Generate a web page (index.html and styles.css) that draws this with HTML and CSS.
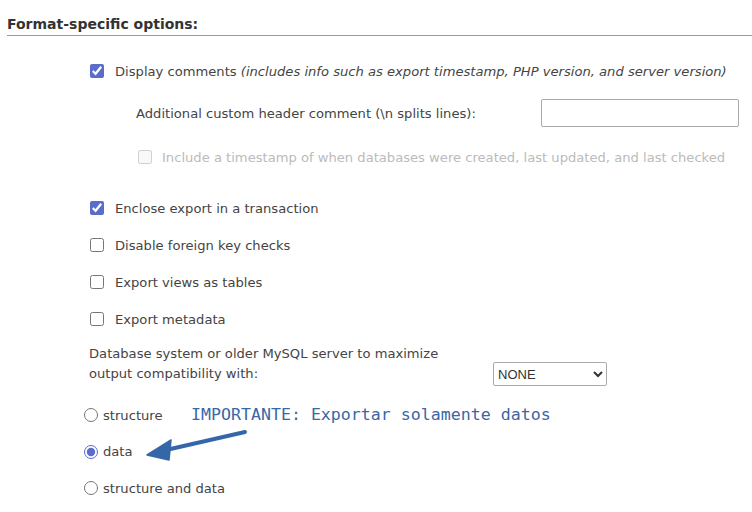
FILE: index.html
```html
<!DOCTYPE html>
<html>
<head>
<meta charset="utf-8">
<link rel="stylesheet" href="styles.css">
</head>
<body>
<div class="page">
  <h2 class="heading">Format-specific options:</h2>
  <div class="options">
    <div class="row row-first">
      <input type="checkbox" class="cb" checked>
      <label class="lbl">Display comments <i>(includes info such as export timestamp, PHP version, and server version)</i></label>
    </div>
    <div class="row row-sub">
      <label class="lbl sub-lbl">Additional custom header comment (\n splits lines):</label>
      <input type="text" class="text-in">
    </div>
    <div class="row row-sub2">
      <input type="checkbox" class="cb" disabled>
      <label class="lbl disabled">Include a timestamp of when databases were created, last updated, and last checked</label>
    </div>
    <div class="row row-gap">
      <input type="checkbox" class="cb" checked>
      <label class="lbl">Enclose export in a transaction</label>
    </div>
    <div class="row">
      <input type="checkbox" class="cb">
      <label class="lbl">Disable foreign key checks</label>
    </div>
    <div class="row">
      <input type="checkbox" class="cb">
      <label class="lbl">Export views as tables</label>
    </div>
    <div class="row">
      <input type="checkbox" class="cb">
      <label class="lbl">Export metadata</label>
    </div>
    <div class="compat">
      <label class="compat-lbl">Database system or older MySQL server to maximize output compatibility with:</label>
      <select class="sel"><option>NONE</option></select>
    </div>
    <div class="radios">
      <div class="rrow"><input type="radio" name="m" class="rb"><label class="lbl">structure</label></div>
      <div class="rrow"><input type="radio" name="m" class="rb" checked><label class="lbl">data</label></div>
      <div class="rrow"><input type="radio" name="m" class="rb"><label class="lbl">structure and data</label></div>
    </div>
  </div>
  <div class="note">IMPORTANTE: Exportar solamente datos</div>
  <svg class="arrow" width="752" height="512" viewBox="0 0 752 512">
    <line x1="245" y1="432" x2="166" y2="450" stroke="#3567a8" stroke-width="4" stroke-linecap="round"/>
    <polygon points="147,455 171,440 169,460" fill="#3567a8" stroke="#3567a8" stroke-width="1.5" stroke-linejoin="round"/>
  </svg>
</div>
</body>
</html>
```
FILE: styles.css
```css
html, body {
  margin: 0;
  padding: 0;
  background: #fff;
}
.page {
  position: relative;
  width: 752px;
  height: 512px;
  overflow: hidden;
  font-family: "DejaVu Sans", sans-serif;
  font-size: 13.12px;
  color: #444;
}
.heading {
  margin: 0 0 0 7px;
  padding-top: 16px;
  height: 19px;
  font-size: 14px;
  font-weight: bold;
  line-height: 17px;
  color: #333;
  border-bottom: 1px solid #999;
}
.options {
  display: flex;
  flex-direction: column;
}
.row {
  display: flex;
  align-items: center;
  height: 30px;
  padding-left: 90px;
  margin-top: 7px;
}
.row-first { margin-top: 20px; }
.row-sub { margin-top: 12px; padding-left: 136px; }
.row-sub2 { margin-top: 14px; padding-left: 138px; }
.row-sub2 .lbl { margin-left: 10px; }
.row-gap { margin-top: 21px; }
.cb {
  width: 14px;
  height: 14px;
  margin: 0;
  accent-color: #5a6ccc;
}
.lbl {
  margin-left: 11px;
  white-space: nowrap;
}
.sub-lbl { margin-left: 0; }
.disabled { color: #bbb; }
.text-in {
  margin: 0 0 0 65px;
  width: 198px;
  height: 28px;
  box-sizing: border-box;
  border: 1px solid #aaa;
  border-radius: 2px;
  padding: 0 4px;
}
.compat {
  display: flex;
  align-items: flex-end;
  margin-top: 10px;
  padding-left: 89px;
}
.compat-lbl {
  width: 380px;
  line-height: 20px;
  margin-right: 24px;
}
.sel {
  width: 114px;
  height: 24px;
  margin: 0 0 -2px 0;
  font-family: "Liberation Sans", Arial, sans-serif;
  font-size: 13px;
  color: #333;
  border: 1px solid #aaa;
  border-radius: 2px;
  background: #fff;
}
.radios {
  display: flex;
  flex-direction: column;
  margin-top: 16px;
  padding-left: 84px;
}
.rrow {
  display: flex;
  align-items: center;
  height: 30px;
  margin-bottom: 6.5px;
}
.rb {
  width: 14px;
  height: 14px;
  margin: 0;
  accent-color: #5a6ccc;
}
.rrow .lbl { margin-left: 5px; }
.note {
  position: absolute;
  left: 191px;
  top: 404px;
  font-family: "DejaVu Sans Mono", monospace;
  font-size: 16.6px;
  line-height: 22px;
  color: #3a67a6;
  white-space: nowrap;
}
.arrow {
  position: absolute;
  left: 0;
  top: 0;
  pointer-events: none;
}
```
